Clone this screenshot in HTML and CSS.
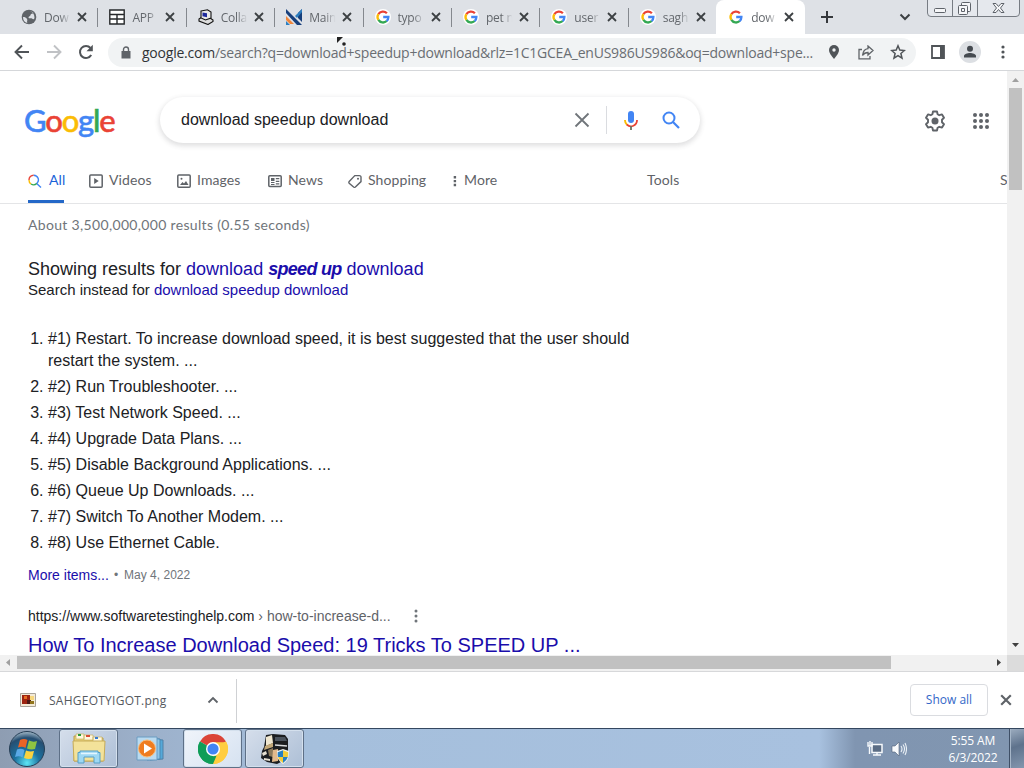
FILE: index.html
```html
<!DOCTYPE html>
<html lang="en">
<head>
<meta charset="utf-8">
<title>download speedup download - Google Search</title>
<link rel="stylesheet" href="styles.css">
</head>
<body>
<svg class="defs" width="0" height="0">
  <symbol id="g" viewBox="0 0 16 16">
    <g fill="none" stroke-width="2.3">
      <path d="M3.4 5.100A5.400 5.400 0 0 1 11.900 4.200" stroke="#ea4335"/>
      <path d="M3.4 10.900A5.400 5.400 0 0 1 3.400 5.100" stroke="#fbbc05"/>
      <path d="M11.700 12A5.400 5.400 0 0 1 3.400 10.900" stroke="#34a853"/>
      <path d="M8.200 8h5.200A5.400 5.400 0 0 1 11.600 12.100" stroke="#4285f4"/>
    </g>
  </symbol>
  <symbol id="x" viewBox="0 0 10 10"><path d="M1 1l8 8M9 1l-8 8" stroke="currentColor" stroke-width="1.8"/></symbol>
</svg>
<div class="tabs">
  <div class="tab"><svg class="fav" viewBox="0 0 16 16"><circle cx="8" cy="8" r="7.3" fill="#5f6368"/><path d="M2 8c2 0 3 .4 4 2s-.5 2 .3 4C3.500 13.500 2 11 2 8zM7 2.500c2-.6 4 0 5.500 1.500-1 1-3 .5-3 2s-2 1-2 2.500 2.500 0 3.500 1 2 1 2.500-.5C13.500 4 10 1.500 7 2.500z" fill="#dee1e6"/></svg><span class="title">Dow</span><svg class="close"><use href="#x"/></svg></div>
  <div class="tab"><svg class="fav" viewBox="0 0 16 16"><path d="M.8 1h14.400v14H.8zM1 5.500h14M1 10h14M8 5.500V15" fill="#fff" stroke="#26282b" stroke-width="1.400"/></svg><span class="title">APP</span><svg class="close"><use href="#x"/></svg></div>
  <div class="tab"><svg class="fav" viewBox="0 0 16 16"><path d="M1 10l3-2 8 1 3 2v1.500l-5 3-9-3.500z" fill="#ddd" stroke="#111" stroke-width="1.100"/><path d="M3 2L9.500.800l3.500 2.200v6L7.500 11 3 9z" fill="#e8e8e8" stroke="#111" stroke-width="1.100"/><path d="M4.500 3.500l4.500.8v4l-4.500-1z" fill="#1f2a9c"/></svg><span class="title">Colla</span><svg class="close"><use href="#x"/></svg></div>
  <div class="tab"><svg class="fav" viewBox="0 0 16 16"><path d="M0 0l16 16h-5L0 4zM16 0v13l-4-4V4z" fill="#173f7c"/><path d="M9 7l7-7v3l-5 6z" fill="#2d7fc0"/><path d="M0 7l8 8H4l-4-4z" fill="#f0863b"/><path d="M0 12l4 4H0z" fill="#2d7fc0"/></svg><span class="title">Main</span><svg class="close"><use href="#x"/></svg></div>
  <div class="tab"><svg class="fav disc"><use href="#g"/></svg><span class="title">typo</span><svg class="close"><use href="#x"/></svg></div>
  <div class="tab"><svg class="fav disc"><use href="#g"/></svg><span class="title">pet n</span><svg class="close"><use href="#x"/></svg></div>
  <div class="tab"><svg class="fav disc"><use href="#g"/></svg><span class="title">user</span><svg class="close"><use href="#x"/></svg></div>
  <div class="tab last"><svg class="fav disc"><use href="#g"/></svg><span class="title">sagh</span><svg class="close"><use href="#x"/></svg></div>
  <div class="tab active"><svg class="fav"><use href="#g"/></svg><span class="title">dow</span><svg class="close"><use href="#x"/></svg></div>
  <svg class="plus" width="14" height="14"><path d="M7 1v12M1 7h12" stroke="#35383c" stroke-width="2"/></svg>
  <svg class="chev" width="12" height="8"><path d="M1.500 1.500L6 6l4.500-4.500" fill="none" stroke="#3c4043" stroke-width="2"/></svg>
  <svg class="winctl" width="94" height="17" viewBox="0 0 94 17"><path d="M.5-2v15q0 3.500 3.500 3.500h85q3.500 0 3.500-3.500V-2M25.500 0v16M50.500 0v16" fill="#e5e8ed" stroke="#777c83"/><g fill="#f5f6f8" stroke="#5e636a"><rect x="7.500" y="8.500" width="11" height="4" rx="1"/><rect x="34.500" y="2.500" width="9" height="9" rx="1"/><rect x="31.500" y="5.500" width="9" height="9" rx="1"/><path d="M34.500 8.500h3v3h-3z"/><path d="M66 3.500h3l2.500 3 2.500-3h3L73.500 8l3.500 4.500h-3l-2.500-3-2.500 3h-3L69.500 8z"/></g></svg>
</div>
<div class="toolbar">
  <svg class="back" width="16" height="16"><path d="M15 8H2M8 1.500L1.500 8 8 14.500" fill="none" stroke="#505458" stroke-width="1.900"/></svg>
  <svg class="fwd" width="16" height="16"><path d="M1 8h13M8 1.500L14.500 8 8 14.500" fill="none" stroke="#c0c2c5" stroke-width="1.900"/></svg>
  <svg class="reload" width="16" height="16"><path d="M13.200 11A6 6 0 1 1 12.500 4" fill="none" stroke="#505458" stroke-width="2"/><path d="M14.800.8v6.400H8.500z" fill="#505458"/></svg>
  <div class="omni">
    <svg width="10" height="13"><path d="M.5 5h9v7.500h-9z" fill="#5f6368"/><path d="M2.500 5V3.500a2.500 2.500 0 0 1 5 0V5" fill="none" stroke="#5f6368" stroke-width="1.400"/></svg>
    <span class="url"><b>google.com</b>/search?q=download+speedup+download&amp;rlz=1C1GCEA_enUS986US986&amp;oq=download+spe...</span>
    <svg class="pin" width="12" height="16" viewBox="0 0 12 16"><path d="M6 1a5 5 0 0 0-5 5c0 3.500 5 9 5 9s5-5.500 5-9a5 5 0 0 0-5-5z" fill="#505458"/><circle cx="6" cy="6" r="1.700" fill="#f1f3f4"/></svg>
    <svg class="share" width="16" height="15"><path d="M4 4.500H1v9.300h11V11" fill="none" stroke="#606468" stroke-width="1.300"/><path d="M10 1l5 4.500-5 4.500V7.500c-2.500 0-4 .7-5.500 3C5 6.500 7 4 10 3.700z" fill="none" stroke="#606468" stroke-width="1.300"/></svg>
    <svg class="star" width="16" height="16" viewBox="0 0 16 16"><path d="M8 1.800l1.800 4.300 4.600.4-3.500 3 1.100 4.600L8 11.600l-4 2.500 1.100-4.600-3.500-3 4.600-.4z" fill="none" stroke="#505458" stroke-width="1.500"/></svg>
  </div>
  <svg class="side" width="14" height="14"><path d="M1 1h12v12H1z" fill="none" stroke="#505458" stroke-width="1.800"/><path d="M9 1h4v12H9z" fill="#505458"/></svg>
  <svg class="avatar" width="22" height="22"><circle cx="11" cy="11" r="11" fill="#dcdfe3"/><circle cx="11" cy="7.800" r="3" fill="#454a50"/><path d="M5 16.500v-1.500c0-2 3.500-3 6-3s6 1 6 3v1.500z" fill="#454a50"/></svg>
  <svg class="menu" width="4" height="14"><g fill="#505458"><circle cx="2" cy="2" r="1.600"/><circle cx="2" cy="7" r="1.600"/><circle cx="2" cy="12" r="1.600"/></g></svg>
</div>
<div class="view">
  <div class="page">
    <div class="head">
      <div class="logo"><span class="b">G</span><span class="r">o</span><span class="y">o</span><span class="b">g</span><span class="gr">l</span><span class="r">e</span></div>
      <div class="search">
        <span class="query">download speedup download</span>
        <svg class="clear" width="16" height="16"><path d="M1.500 1.500l13 13M14.500 1.500l-13 13" stroke="#70757a" stroke-width="1.800"/></svg>
        <span class="bar"></span>
        <svg class="mic" width="14" height="21"><path d="M7 1a3 3 0 0 1 3 3v6a3 3 0 0 1-6 0V4a3 3 0 0 1 3-3z" fill="#4285f4"/><path d="M1 10a6 6 0 0 0 2 4.800" fill="none" stroke="#fbbc05" stroke-width="1.800"/><path d="M2.800 14.500A6 6 0 0 0 13 10" fill="none" stroke="#ea4335" stroke-width="1.800"/><path d="M7 16v4" stroke="#6d7360" stroke-width="1.800"/></svg>
        <svg class="mag" width="18" height="18"><circle cx="7" cy="7" r="5.500" fill="none" stroke="#4285f4" stroke-width="2"/><path d="M11 11l6 6" stroke="#4285f4" stroke-width="2.200"/></svg>
      </div>
      <svg class="gear" width="22" height="22" viewBox="0 0 22 22"><path d="M9 1.500h4l.6 2.700 1.700 1 2.700-.8 2 3.400-2 1.900v2.600l2 1.900-2 3.400-2.700-.8-1.700 1-.6 2.700H9l-.6-2.700-1.700-1-2.700.8-2-3.400 2-1.900V9.700L2 7.800l2-3.400 2.700.8 1.700-1z" fill="none" stroke="#5f6368" stroke-width="1.900" stroke-linejoin="round"/><circle cx="11" cy="11" r="3.500" fill="#5f6368"/></svg>
      <svg class="apps" width="16" height="16"><g fill="#5f6368"><circle cx="2" cy="2" r="2"/><circle cx="8" cy="2" r="2"/><circle cx="14" cy="2" r="2"/><circle cx="2" cy="8" r="2"/><circle cx="8" cy="8" r="2"/><circle cx="14" cy="8" r="2"/><circle cx="2" cy="14" r="2"/><circle cx="8" cy="14" r="2"/><circle cx="14" cy="14" r="2"/></g></svg>
    </div>
    <div class="nav">
      <span class="item all"><svg width="14" height="14"><path d="M1 6A4.700 4.700 0 0 1 5.700 1.200" fill="none" stroke="#ea4335" stroke-width="1.400"/><path d="M5.700 1.200a4.700 4.700 0 0 1 3 8.300L13 13.500" fill="none" stroke="#4285f4" stroke-width="1.400"/><path d="M1 6a4.700 4.700 0 0 0 2 4" fill="none" stroke="#fbbc05" stroke-width="1.400"/><path d="M3 10a4.700 4.700 0 0 0 5.700-.5" fill="none" stroke="#34a853" stroke-width="1.400"/></svg><span>All</span></span>
      <span class="item videos"><svg width="14" height="14"><rect x=".8" y="1" width="12.400" height="12.200" rx="1" fill="none" stroke="#5f6368" stroke-width="1.500"/><path d="M5.200 4l4.500 3-4.500 3z" fill="#5f6368"/></svg><span>Videos</span></span>
      <span class="item images"><svg width="14" height="14"><rect x=".8" y="1" width="12.400" height="12.200" rx="1" fill="none" stroke="#5f6368" stroke-width="1.500"/><path d="M3 11l2.500-3 1.500 1.500L9 7l2.500 4z" fill="#5f6368"/><circle cx="4.500" cy="4.700" r="1" fill="#5f6368"/></svg><span>Images</span></span>
      <span class="item news"><svg width="14" height="14"><rect x=".8" y="1.800" width="12.400" height="10.600" rx="1" fill="none" stroke="#5f6368" stroke-width="1.500"/><path d="M3 4h3.500v3H3zM3 8h3.500v1H3zM3 10h3.500v1H3zM7.800 4h3.500v1.200H7.800zM7.800 6.700h3.500v1.200H7.800zM7.800 9.300h3.500v1.200H7.800z" fill="#5f6368"/></svg><span>News</span></span>
      <span class="item shopping"><svg width="14" height="14"><path d="M1.200 7.500L6.800 1.600h4.400q2 0 1.800 2v4L7.400 13q-.9.700-1.800 0L1.200 9.200q-.7-.9 0-1.700z" fill="none" stroke="#5f6368" stroke-width="1.400"/><circle cx="10" cy="4.700" r="1" fill="#5f6368"/></svg><span>Shopping</span></span>
      <span class="item more"><svg width="4" height="12"><path d="M.7 1h2.400v2.400H.7zM.7 4.900h2.400v2.400H.7zM.7 8.800h2.400v2.400H.7z" fill="#5f6368"/></svg><span>More</span></span>
      <span class="item tools"><span>Tools</span></span>
      <span class="item safe"><span>SafeSearch</span></span>
    </div>
    <div class="stats"><span>About 3,500,000,000 results (0.55 seconds)</span></div>
    <div class="showing">Showing results for <a>download <b>speed up</b> download</a></div>
    <div class="instead">Search instead for <a>download speedup download</a></div>
    <ol class="steps">
      <li>#1) Restart. To increase download speed, it is best suggested that the user should restart the system. ...</li>
      <li>#2) Run Troubleshooter. ...</li>
      <li>#3) Test Network Speed. ...</li>
      <li>#4) Upgrade Data Plans. ...</li>
      <li>#5) Disable Background Applications. ...</li>
      <li>#6) Queue Up Downloads. ...</li>
      <li>#7) Switch To Another Modem. ...</li>
      <li>#8) Use Ethernet Cable.</li>
    </ol>
    <div class="moreitems"><a>More items...</a><span class="dot">•</span><span class="date">May 4, 2022</span></div>
    <div class="cite">https://www.softwaretestinghelp.com<span class="crumb"> › how-to-increase-d...</span><svg width="4" height="14"><g fill="#70757a"><circle cx="2" cy="2" r="1.500"/><circle cx="2" cy="7" r="1.500"/><circle cx="2" cy="12" r="1.500"/></g></svg></div>
    <div class="result"><a>How To Increase Download Speed: 19 Tricks To SPEED UP ...</a></div>
  </div>
  <div class="vscroll"><svg width="17" height="17"><path d="M5 11l3.500-4 3.500 4z" fill="#a0a0a0"/></svg><div class="vthumb"></div><svg class="down" width="17" height="17"><path d="M5 5l3.500 4L12 5z" fill="#404040"/></svg></div>
</div>
<div class="hrow"><svg width="17" height="16"><path d="M10 4L6 7.500l4 3.500z" fill="#a0a0a0"/></svg><div class="hthumb"></div><svg class="right" width="17" height="16"><path d="M7 4l4 3.500L7 11z" fill="#404040"/></svg><div class="corner"></div></div>
<div class="downloads">
  <svg class="thumb" width="16" height="14"><path d="M.5.500h15v13H.5z" fill="#f3ead7" stroke="#a8a39b"/><path d="M2 2h8v9H2z" fill="#9d2412"/><path d="M4 3h3v3H4z" fill="#e76c22"/><path d="M7 7h4v4H7z" fill="#4b1915"/><path d="M10 3h4v4h-4z" fill="#f7d77d"/><path d="M10 8h4v3h-4z" fill="#92751c"/></svg>
  <span class="fname">SAHGEOTYIGOT.png</span>
  <svg class="up" width="12" height="8"><path d="M1.500 6.500L6 2l4.500 4.500" fill="none" stroke="#5f6368" stroke-width="1.800"/></svg>
  <div class="showall"><span>Show all</span></div>
  <svg class="dclose"><use href="#x"/></svg>
</div>
<div class="taskbar">
  <svg class="start" width="38" height="38" viewBox="0 0 38 38"><defs><radialGradient id="orb" cx=".5" cy=".9" r=".9"><stop offset="0" stop-color="#5ee6f5"/><stop offset=".4" stop-color="#1b719f"/><stop offset=".8" stop-color="#264e71"/><stop offset="1" stop-color="#a6bccb"/></radialGradient></defs><circle cx="19" cy="19" r="17.500" fill="url(#orb)" stroke="#263e55"/><path d="M12 10q4-2 7.500 0l-2 8q-3-2-7.500-.5z" fill="#eb6426"/><path d="M21 10.500q4 2 8 .5l-2 8q-4 1-8-.5z" fill="#8fc442"/><path d="M9 19.500q4-1.500 7.500.5l-2 7.500q-3-2-7.500-.5z" fill="#5aa9e6"/><path d="M18 20.500q4 1.500 8 .5l-2 7.500q-4 1-8-.5z" fill="#fbd23f"/></svg>
  <div class="task explorer"><svg width="34" height="32" viewBox="0 0 34 32"><path d="M2 3h9l2 2h18v23H2z" fill="#e8cf77" stroke="#b99c4a"/><path d="M4 1h8v5H4zM12 2h9v5h-9zM21 4h9v5h-9z" fill="#fff8df" stroke="#c8b25e" stroke-width=".7"/><path d="M6 1h3v2H6z" fill="#289b3a"/><path d="M14 2h4v2h-4z" fill="#d94b33"/><path d="M23 4h3v2h-3z" fill="#377bd0"/><path d="M1 8h32l-1 20H2z" fill="#f3e29a" stroke="#c7ac58"/><path d="M6 30V19.500h2V18h18v1.500h2V30h-6v-6H12v6z" fill="#9ed8f3" stroke="#579fc7"/><path d="M9 20.500h16" stroke="#e4f6ff" stroke-width="1.500"/></svg></div>
  <div class="task wmp"><svg width="30" height="26" viewBox="0 0 30 26"><path d="M14 3l13 1v19l-13 1z" fill="#55a9d9" stroke="#5080a6"/><path d="M11 2l13 1v20l-13 1z" fill="#8bc5e8" stroke="#4a87b2"/><path d="M1 1h20v23H1z" fill="#b9daf0" stroke="#6b9cc2"/><circle cx="11" cy="12.500" r="8.500" fill="#ef7c20" stroke="#f9bd7b"/><path d="M8 7.500l8 5-8 5z" fill="#fff"/></svg></div>
  <div class="task chrome"><svg width="30" height="30" viewBox="0 0 30 30"><path d="M15 15L2 7.500A15 15 0 0 1 28 7.500z" fill="#db4437"/><path d="M15 15L28 7.500A15 15 0 0 1 15 30z" fill="#ffcd40"/><path d="M15 15l0 15A15 15 0 0 1 2 7.500z" fill="#0f9d58"/><path d="M15 8.300h13.400A15 15 0 0 1 15 30l6-11.300z" fill="#ffcd40"/><path d="M2 7.500L9 18.500q4 5 9.500 3.200L15 30A15 15 0 0 1 2 7.500z" fill="#0f9d58"/><circle cx="15" cy="15" r="7" fill="#fff"/><circle cx="15" cy="15" r="5.600" fill="#4285f4"/></svg></div>
  <div class="task setup"><svg width="32" height="32" viewBox="0 0 32 32"><path d="M7 2l7-1 12 1 3 4v15l-5 7-6 3-10-2-6-4 1-7 2-4z" fill="#1b1d20"/><path d="M7 4l6-2 1 8-7 3z" fill="#efe6cf"/><path d="M6 13l8-3v4l-9 3z" fill="#c3a878"/><path d="M3 20l4-2 1 3-4 2zM5 25l6 1v2l-6-1z" fill="#e7e0d2"/><path d="M9 17l5-2v9l-4-1z" fill="#8d7a5b"/><path d="M16 4h10l2 4H16z" fill="#4b535d"/><path d="M16 12l12 1" stroke="#d8dadd" stroke-width="1.500"/><path d="M14 17l5-1v12l-6 1z" fill="#e2b98c"/><path d="M24 16l6 2c0 6-1 10-6 13-5-3-6-7-6-13z" fill="#eef0ec"/><path d="M24 17.300v6.700h-5q-.5-2-.2-4.800zM24 24h4.800q-1 3.700-4.800 6z" fill="#267fc3"/><path d="M24 17.300l5.100 1.900q.2 2.800-.3 4.800H24zM24 24v6q-4-2.500-5-6z" fill="#f3cc37"/></svg></div>
  <svg class="net" width="16" height="15"><path d="M5 3.500h10v8H5z" fill="#5b6d85" stroke="#f6f9fc" stroke-width="1.500"/><path d="M10 11v3M6 14h8M2.500 6v7M1 1v4h4V1M3 0v5" fill="none" stroke="#f6f9fc" stroke-width="1.400"/></svg>
  <svg class="vol" width="16" height="16"><path d="M1 5h3l4-4v14l-4-4H1z" fill="#f8fafc" stroke="#4e6077" stroke-width=".6"/><path d="M10 5q2 3 0 6M12 3.500q3 4.500 0 9M14 2q3 6 0 12" fill="none" stroke="#eaf0f6" stroke-width="1.100"/></svg>
  <div class="clock"><span class="time">5:55 AM</span><span class="day">6/3/2022</span></div>
  <div class="peek"></div>
</div>
<svg class="cursor" width="11" height="10"><path d="M1 0h6L1 6z" fill="#222"/><circle cx="8" cy="7" r="1.800" fill="#222"/></svg>
</body>
</html>
```

FILE: styles.css
```css
* { box-sizing: border-box; }
body { margin: 0; width: 1024px; height: 768px; overflow: hidden; background: #fff; font-family: "Liberation Sans", Arial, sans-serif; color: #202124; display: flex; flex-direction: column; position: relative; }
svg { display: block; flex: none; }
.defs { position: absolute; }
a { color: #1a0dab; }

.tabs { height: 34px; flex: none; background: #dee1e6; display: flex; align-items: center; padding-left: 9px; font: 12px "Open Sans", sans-serif; color: #63676c; }
.tab { width: 88.400px; height: 34px; flex: none; display: flex; align-items: center; padding-left: 12px; position: relative; }
.tab::after { content: ""; position: absolute; right: -1px; top: 8px; width: 1px; height: 19px; background: #84888e; }
.tab.last::after, .tab.active::after { display: none; }
.tab.active { background: #fff; border-radius: 8px 8px 0 0; }
.fav { width: 16px; height: 16px; }
.fav.disc { background: #fff; border-radius: 50%; }
.title { width: 28px; margin-left: 7px; letter-spacing: -.25px; overflow: hidden; white-space: nowrap; -webkit-mask-image: linear-gradient(90deg, #000 55%, transparent 95%); mask-image: linear-gradient(90deg, #000 55%, transparent 95%); }
.close { width: 10px; height: 10px; margin-left: 5px; color: #3c4043; }
.plus { margin-left: 15px; }
.chev { margin-left: 65px; }
.winctl { margin-left: 16px; align-self: flex-start; }

.toolbar { height: 37px; flex: none; background: #fff; border-bottom: 1px solid #d5d7da; display: flex; align-items: center; padding-left: 14px; }
.fwd { margin-left: 16px; }
.reload { margin-left: 16px; }
.omni { width: 808px; height: 29px; margin-left: 14px; padding-left: 13px; border-radius: 15px; background: #f1f3f4; display: flex; align-items: center; }
.url { width: 672px; margin-left: 11px; font: 14px "Open Sans", sans-serif; letter-spacing: -.23px; color: #6a6e73; white-space: nowrap; }
.url b { font-weight: 400; color: #303336; }
.pin { margin-left: 14px; }
.share { margin-left: 18px; }
.star { margin-left: 16px; }
.side { margin-left: 15px; }
.avatar { margin-left: 14px; }
.menu { margin-left: 20px; }

.view { height: 584px; flex: none; display: flex; }
.page { width: 1007px; height: 584px; overflow: hidden; }
.head { height: 92px; display: flex; padding: 26px 0 0 24px; }
.logo { width: 136px; height: 46px; font: 500 31px/46px Lato, sans-serif; letter-spacing: -1.2px; -webkit-text-stroke: .5px currentColor; }
.b { color: #4285f4; } .r { color: #ea4335; } .y { color: #fbbc05; } .gr { color: #34a853; }
.b, .r, .y, .gr { -webkit-text-stroke-color: currentColor; }
.search { width: 540px; height: 46px; border-radius: 23px; box-shadow: 0 2px 5px 1px rgba(64, 60, 67, .16); display: flex; align-items: center; padding-left: 21px; }
.query { width: 393px; font-size: 16px; line-height: 20px; }
.bar { width: 1px; height: 28px; margin-left: 16px; background: #dadce0; }
.mic { margin-left: 17px; }
.mag { margin-left: 24px; }
.gear { margin: 13px 0 0 224px; }
.apps { margin: 16px 0 0 27px; }
.nav { height: 41px; border-bottom: 1px solid #e4e5e7; display: flex; padding-left: 28px; font: 14px/36px Lato, sans-serif; letter-spacing: .1px; color: #5f6368; }
.item { display: flex; align-items: center; height: 40px; padding-bottom: 4px; flex: none; white-space: nowrap; }
.item span { margin-top: -2px; }
.all { width: 36px; gap: 7px; color: #1a63d8; border-bottom: 3px solid #2468c8; padding-bottom: 1px; }
.videos { width: 88px; margin-left: 25px; gap: 6px; }
.images { width: 91px; gap: 6px; }
.news { width: 80px; gap: 6px; }
.shopping { width: 105px; gap: 6px; }
.more { width: 194px; gap: 7px; }
.tools { width: 353px; }
.stats { height: 51px; padding: 11px 0 0 28px; font: 14px/20px Lato, sans-serif; letter-spacing: .33px; color: #70757a; }
.showing { padding-left: 28px; font-size: 18px; line-height: 23px; margin-top: 3px; }
.showing b { font-style: italic; letter-spacing: -.7px; }
.instead { padding-left: 28px; font-size: 15px; line-height: 17px; }
.steps { margin: 30px 0 0 28px; padding-left: 20px; width: 622px; font-size: 16px; line-height: 22px; }
.steps li { margin-bottom: 4px; }
.moreitems { height: 20px; margin-top: 11px; padding-left: 28px; font-size: 14px; line-height: 20px; display: flex; }
.dot { margin-left: 5px; font-size: 12px; color: #70757a; }
.date { margin-left: 6px; font-size: 12px; line-height: 21px; color: #70757a; }
.cite { height: 20px; margin-top: 21px; padding-left: 28px; font-size: 14px; line-height: 20px; display: flex; align-items: center; white-space: pre; }
.crumb { color: #5f6368; }
.cite svg { margin-left: 23px; }
.result { padding-left: 28px; font-size: 20px; line-height: 26px; margin-top: 6px; }
.vscroll { width: 17px; height: 584px; background: #f1f1f1; display: flex; flex-direction: column; }
.vthumb { width: 13px; height: 102px; margin-left: 2px; background: #c1c1c1; }
.down { margin-top: auto; }
.hrow { height: 17px; flex: none; background: #f1f1f1; border-bottom: 1px solid #d7d8da; display: flex; }
.hthumb { width: 874px; height: 13px; margin-top: 1px; background: #c1c1c1; }
.right { margin-left: auto; }
.corner { width: 17px; height: 16px; background: #dcdcdc; }

.downloads { height: 56px; flex: none; display: flex; align-items: center; padding-left: 20px; font: 12px "Open Sans", sans-serif; color: #55595e; }
.fname { width: 120px; margin-left: 13px; letter-spacing: .25px; white-space: nowrap; }
.up { margin-left: 38px; }
.showall { width: 78px; height: 32px; margin-left: 691px; padding-bottom: 2px; border: 1px solid #dadce0; border-radius: 4px; display: flex; align-items: center; justify-content: center; color: #3367c8; position: relative; }
.showall::before { content: ""; position: absolute; left: -675px; top: -6px; width: 1px; height: 44px; background: #cfd1d4; }
.dclose { width: 12px; height: 12px; margin-left: 12px; color: #5f6368; }

.taskbar { height: 40px; flex: none; border-top: 1px solid #34475f; background: linear-gradient(90deg, #8e9db2 0, #9cb0ca 14%, #a5bfdc 30%, #a8c1df 80%, #8095b1 83.500%, #8196b0 100%); display: flex; align-items: center; padding-left: 8px; }
.task { width: 59px; height: 39px; display: flex; align-items: center; justify-content: center; border: 1px solid #5e7087; border-radius: 3px; background: linear-gradient(135deg, #d5deeb, #adbfd6); box-shadow: inset 0 0 0 1px #d4e0ed; }
.explorer { margin-left: 13px; }
.task.wmp { width: 65px; background: none; border: 0; box-shadow: none; }
.chrome { background: linear-gradient(135deg, #f0f4fa, #d6e2f1); }
.setup { margin-left: 3px; }
.net { margin-left: 563px; }
.vol { margin-left: 8px; }
.clock { width: 60px; margin-left: 36px; display: flex; flex-direction: column; align-items: center; font: 12px/17px "Open Sans", sans-serif; letter-spacing: -.1px; color: #fff; }
.peek { width: 15px; height: 39px; margin-left: auto; border-left: 1px solid #3e4f66; background: linear-gradient(160deg, #9cacbf, #5e728c 45%, #8396ae); box-shadow: inset 1px 0 0 #a6b6c8; }
.cursor { position: absolute; left: 336px; top: 37px; }
```
